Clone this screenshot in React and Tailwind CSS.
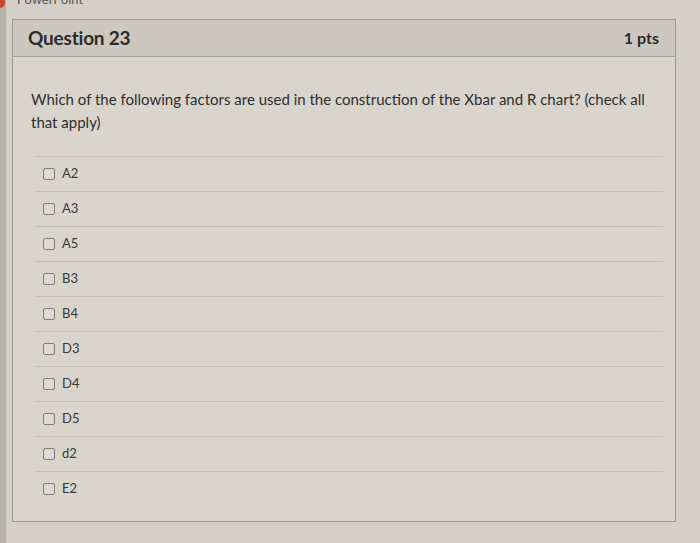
const OPTIONS = ["A2", "A3", "A5", "B3", "B4", "D3", "D4", "D5", "d2", "E2"];

const App = () => {
  return (
    <div
      className="relative w-[700px] h-[543px] overflow-hidden bg-[#d4d0c8] text-[#2e2d2b]"
      style={{ fontFamily: "Lato, 'Open Sans', sans-serif" }}
    >
      {/* app bar cut off at top */}
      <div className="absolute left-0 top-0 w-[6px] h-[543px] bg-[#b7b3ab]" />
      <div className="absolute left-[-5px] top-[-3px] w-[10px] h-[11px] rounded-full bg-[#c8462e]" />
      <div className="absolute left-[17px] top-[-10px] text-[13px] text-[#5a5854]">
        PowerPoint
      </div>

      <div className="pt-[19px] pl-[12px]">
        <div className="w-[664px] border border-[#9d9a93] bg-[#d9d5cc]">
          {/* header */}
          <div className="h-[37px] flex items-center justify-between px-[15px] bg-[#ccc8c0] border-b border-[#a6a39c]">
            <h2 className="text-[19px] font-bold tracking-[-0.2px]">Question 23</h2>
            <span className="text-[16px] font-bold mr-[1px]">1 pts</span>
          </div>

          {/* body */}
          <div className="pt-[31px] pb-[15px]">
            <p className="px-[18px] pr-[20px] text-[15px] leading-[23px] text-[#2f2e2c]">
              Which of the following factors are used in the construction of the Xbar and R chart? (check all
              that apply)
            </p>

            <div className="mt-[22px] ml-[22px] mr-[12px]">
              {OPTIONS.map((opt) => (
                <label
                  key={opt}
                  className="h-[35px] flex items-center border-t border-[#c3bfb7] pl-[8px] cursor-pointer"
                >
                  <span className="w-[12px] h-[12px] rounded-[2px] border border-[#807d77] bg-[#dedad2]" />
                  <span className="ml-[7px] text-[13px] text-[#3a3936]">{opt}</span>
                </label>
              ))}
            </div>
          </div>
        </div>
      </div>
    </div>
  );
};

export default App;
